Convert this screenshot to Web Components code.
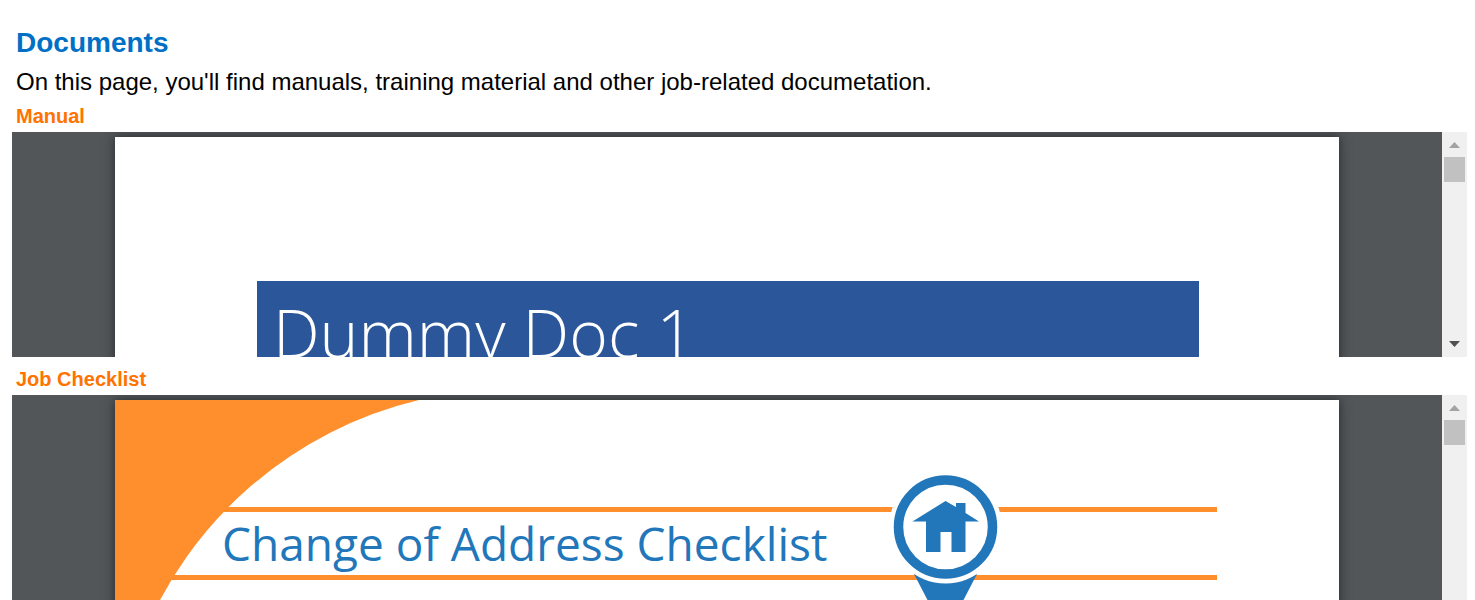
<!DOCTYPE html>
<html lang="en">
<head>
<meta charset="utf-8">
<title>Documents</title>
<style>
html, body { height: 100%; }
body { margin: 0; overflow: hidden; background: #fff; color: #000; font-family: "Liberation Sans", Arial, sans-serif; }
</style>
</head>
<body>
<documents-page></documents-page>
<script>
class BaseElement extends HTMLElement {
  constructor() {
    super();
    this.attachShadow({ mode: "open" }).innerHTML = this.constructor.markup;
  }
}

class DocumentsPage extends BaseElement {
  static markup = `
    <style>
      :host { display: block; padding: 25px 8px 0 12px; }
      header { padding: 0 4px; }
      h1 { margin: 0; font-size: 28px; line-height: 36px; color: #0070c6; }
      p { margin: 0; padding-top: 3px; font-size: 24px; line-height: 36px; }
    </style>
    <header>
      <h1>Documents</h1>
      <p>On this page, you'll find manuals, training material and other job-related documetation.</p>
    </header>
    <document-section>
      <span slot="title">Manual</span>
      <manual-sheet></manual-sheet>
    </document-section>
    <document-section>
      <span slot="title">Job Checklist</span>
      <checklist-sheet></checklist-sheet>
    </document-section>`;
}

class DocumentSection extends BaseElement {
  static markup = `
    <style>
      :host { display: block; padding-bottom: 6px; }
      h2 { margin: 0; padding: 0 4px; font-size: 20px; line-height: 32px; color: #ff7300; }
    </style>
    <h2><slot name="title"></slot></h2>
    <document-viewer><slot></slot></document-viewer>`;
}

class DocumentViewer extends BaseElement {
  static markup = `
    <style>
      :host { display: flex; height: 225px; background: #525659; }
      .canvas { flex: 1; min-width: 0; overflow: hidden; padding: 5px 103px 0; }
      .sheet { height: 480px; background: #fff; box-shadow: 0 0 10px rgba(28, 30, 32, 0.8); overflow: hidden; }
    </style>
    <div class="canvas"><div class="sheet"><slot></slot></div></div>
    <scroll-rail></scroll-rail>`;
}

class ScrollRail extends BaseElement {
  static markup = `
    <style>
      :host { display: flex; flex-direction: column; width: 25px; background: #f0f0f0; }
      button { display: flex; align-items: center; justify-content: center; width: 25px; height: 25px; margin: 0; padding: 0; border: 0; background: none; color: #505050; }
      button:disabled { color: #a3a3a3; }
      .down { height: 26px; }
      svg { display: block; }
      .track { flex: 1; padding: 0 2px; }
      .thumb { height: 25px; background: #c1c1c1; }
    </style>
    <button type="button" disabled aria-label="Scroll up"><svg width="11" height="6" viewBox="0 0 11 6"><path d="M5.5 0 11 6H0z" fill="currentColor"/></svg></button>
    <div class="track"><div class="thumb"></div></div>
    <button type="button" class="down" aria-label="Scroll down"><svg width="11" height="6" viewBox="0 0 11 6"><path d="M0 0h11L5.5 6z" fill="currentColor"/></svg></button>`;
}

class ManualSheet extends BaseElement {
  static markup = `
    <style>
      :host { display: block; padding: 144px 140px 0 142px; }
      .cover { height: 240px; padding: 3px 16px; background: #2b579a; color: #fff; }
      h3 { margin: 0; font: 300 66px/96px "Open Sans", "Noto Sans", sans-serif; white-space: nowrap; }
    </style>
    <div class="cover"><h3>Dummy Doc 1</h3></div>`;
}

class ChecklistSheet extends BaseElement {
  static markup = `
    <style>
      :host { display: block; position: relative; padding: 107px 122px 0 48px; }
      .corner { position: absolute; left: 0; top: 0; }
      .band { position: relative; border: solid #ff8f2d; border-width: 5px 0; padding-left: 59px; }
      h3 { margin: 0; font: 400 46px/63px "Open Sans", "Noto Sans", sans-serif; color: #2277bb; white-space: nowrap; }
      .pin { position: absolute; left: 721px; top: -42px; }
    </style>
    <svg class="corner" width="320" height="240" viewBox="0 0 320 240"><path d="M0 0H304A397.500 397.500 0 0 0 26.500 240H0z" fill="#ff8f2d"/></svg>
    <div class="band">
      <h3>Change of Address Checklist</h3>
      <svg class="pin" width="124" height="160" viewBox="884 470 124 160">
        <path d="M914 574h63l-27 52h-9z" fill="#2277bb"/>
        <circle cx="945.500" cy="527" r="56.500" fill="#fff"/>
        <circle cx="945.500" cy="527" r="47" fill="#fff" stroke="#2277bb" stroke-width="9.500"/>
        <path d="M945.500 501 956 507V503h9.500v10L979 521.500H965.500V552H951.500V532H940.500V552H926V521.500H912.500z" fill="#2277bb"/>
      </svg>
    </div>`;
}

customElements.define("manual-sheet", ManualSheet);
customElements.define("checklist-sheet", ChecklistSheet);
customElements.define("scroll-rail", ScrollRail);
customElements.define("document-viewer", DocumentViewer);
customElements.define("document-section", DocumentSection);
customElements.define("documents-page", DocumentsPage);
</script>
</body>
</html>
